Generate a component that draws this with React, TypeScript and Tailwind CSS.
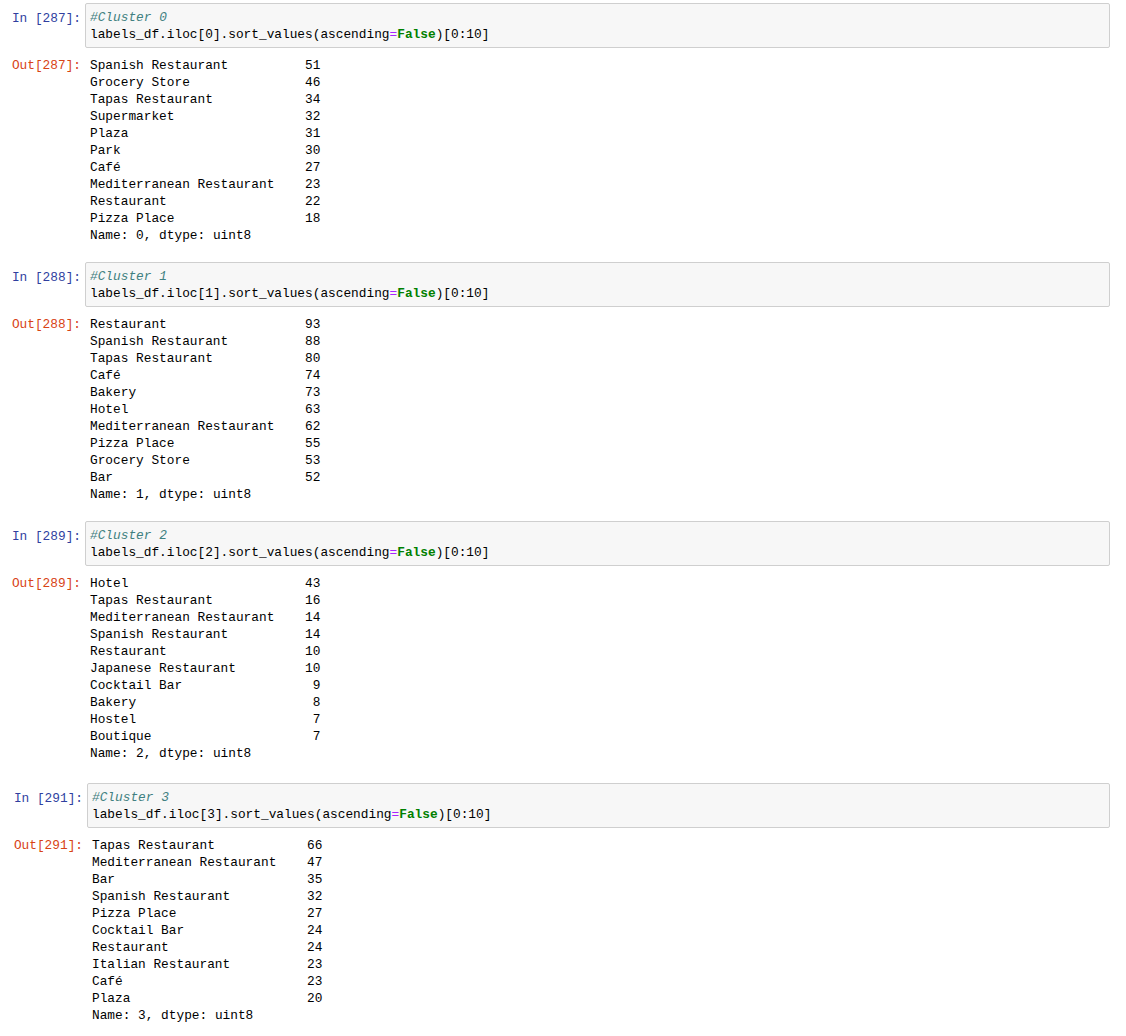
import React from "react"

type Row = [string, number]

interface Cell {
  n: number
  idx: number
  rows: Row[]
  shift?: boolean
}

const cells: Cell[] = [
  {
    n: 287,
    idx: 0,
    rows: [
      ["Spanish Restaurant", 51],
      ["Grocery Store", 46],
      ["Tapas Restaurant", 34],
      ["Supermarket", 32],
      ["Plaza", 31],
      ["Park", 30],
      ["Café", 27],
      ["Mediterranean Restaurant", 23],
      ["Restaurant", 22],
      ["Pizza Place", 18],
    ],
  },
  {
    n: 288,
    idx: 1,
    rows: [
      ["Restaurant", 93],
      ["Spanish Restaurant", 88],
      ["Tapas Restaurant", 80],
      ["Café", 74],
      ["Bakery", 73],
      ["Hotel", 63],
      ["Mediterranean Restaurant", 62],
      ["Pizza Place", 55],
      ["Grocery Store", 53],
      ["Bar", 52],
    ],
  },
  {
    n: 289,
    idx: 2,
    rows: [
      ["Hotel", 43],
      ["Tapas Restaurant", 16],
      ["Mediterranean Restaurant", 14],
      ["Spanish Restaurant", 14],
      ["Restaurant", 10],
      ["Japanese Restaurant", 10],
      ["Cocktail Bar", 9],
      ["Bakery", 8],
      ["Hostel", 7],
      ["Boutique", 7],
    ],
  },
  {
    n: 291,
    idx: 3,
    shift: true,
    rows: [
      ["Tapas Restaurant", 66],
      ["Mediterranean Restaurant", 47],
      ["Bar", 35],
      ["Spanish Restaurant", 32],
      ["Pizza Place", 27],
      ["Cocktail Bar", 24],
      ["Restaurant", 24],
      ["Italian Restaurant", 23],
      ["Café", 23],
      ["Plaza", 20],
    ],
  },
]

const mono = "font-['Liberation_Mono',monospace] text-[12.8px] leading-[17px]"

function NotebookCell({ cell }: { cell: Cell }) {
  return (
    <div className={cell.shift ? "mt-[21px] ml-[2px]" : "mt-[18px] first:mt-0"}>
      {/* input */}
      <div className="flex">
        <div className={`w-[81px] shrink-0 text-right pt-[7px] text-[#303F9F] whitespace-pre ${mono}`}>
          In [{cell.n}]:
        </div>
        <div
          className={`ml-[4px] flex-1 border border-[#cfcfcf] bg-[#f7f7f7] rounded-[2px] pl-[4px] pt-[5px] pb-[4px] text-black whitespace-pre ${mono}`}
        >
          <div className="italic text-[#408080]">#Cluster {cell.idx}</div>
          <div>
            labels_df.iloc[{cell.idx}].sort_values(ascending
            <span className="text-[#AA22FF]">=</span>
            <span className="font-bold text-[#008000]">False</span>)[0:10]
          </div>
        </div>
      </div>
      {/* output */}
      <div className="flex mt-[9px]">
        <div className={`w-[81px] shrink-0 text-right text-[#D84315] whitespace-pre ${mono}`}>
          Out[{cell.n}]:
        </div>
        <div className={`ml-[9px] text-black whitespace-pre ${mono}`}>
          {cell.rows.map(([name, v]) => (
            <div key={name}>
              {name.padEnd(28, " ")}
              {String(v).padStart(2, " ")}
            </div>
          ))}
          <div>Name: {cell.idx}, dtype: uint8</div>
        </div>
      </div>
    </div>
  )
}

export default function App() {
  return (
    <div className="w-[1126px] min-h-[1036px] bg-white pt-[3px] pr-[16px]">
      {cells.map((c) => (
        <NotebookCell key={c.n} cell={c} />
      ))}
    </div>
  )
}
